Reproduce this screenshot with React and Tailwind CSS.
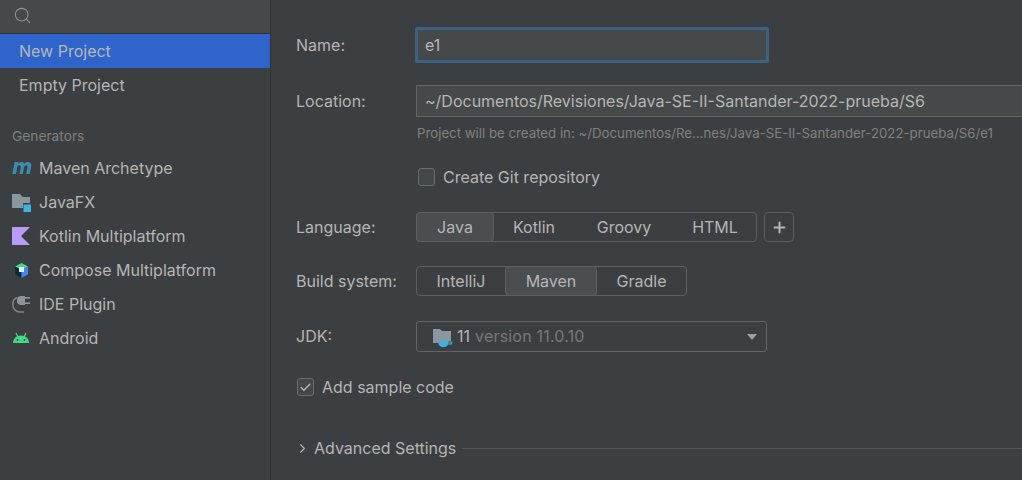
import { Check, ChevronRight, Plus, Search } from 'lucide-react';

function MavenIcon() {
  return (
    <svg width="20" height="20" viewBox="0 0 20 20">
      <path d="M0.3 16 L2.6 4 H6.6 L6.4 5.6 C8 3.6 11.2 3.2 12.2 5.6 C14 3.4 18.8 2.9 19.3 6.6 C19.4 7.6 19.2 8.6 19 9.6 L17.7 16 H14.2 L15.5 9.4 C15.9 7.2 13.9 6.6 12.3 8.2 L10.7 16 H7.4 L8.7 9.4 C9.1 7.2 7.1 6.6 5.5 8.2 L3.9 16 Z" fill="#3a8bad" />
    </svg>
  );
}

function JavaFxIcon() {
  return (
    <svg width="20" height="20" viewBox="0 0 20 20">
      <path d="M0 2 H8 L10.5 5 H18 V11 H11 V16 H0 Z" fill="#8a979f" />
      <rect x="11.5" y="12.5" width="7.5" height="7.5" fill="#3cb2e2" />
    </svg>
  );
}

function KotlinIcon() {
  return (
    <svg width="20" height="20" viewBox="0 0 20 20">
      <path d="M0 1 H18 L9 10 L18 19 H0 Z" fill="#b99bf8" />
    </svg>
  );
}

function ComposeIcon() {
  return (
    <svg width="20" height="20" viewBox="0 0 20 20">
      <path d="M9.5 3 L16 6.5 L9.5 10 L3 6.5 Z" fill="#3ddc84" />
      <path d="M3 6.5 L9.5 10 V18 L3 14.3 Z" fill="#0d2a3a" />
      <path d="M16 6.5 L9.5 10 V18 L16 14.3 Z" fill="#4285f4" />
      <rect x="7" y="7" width="5" height="5" fill="#e8f1f6" />
    </svg>
  );
}

function PluginIcon() {
  return (
    <svg width="20" height="20" viewBox="0 0 20 20">
      <path d="M5 3.5 C1.8 5 0.8 7.5 0.8 10 C0.8 15 4 18 8 18 H12" fill="none" stroke="#7d8488" strokeWidth="1.5" />
      <path d="M5 6 C5 3.5 6.5 2 9 2 H13 V11 H9 C6.5 11 5 9.5 5 7.5 Z" fill="#8c9499" />
      <rect x="13" y="3" width="5" height="1.6" fill="#8c9499" />
      <rect x="13" y="8.4" width="5" height="1.6" fill="#8c9499" />
    </svg>
  );
}

function AndroidIcon() {
  return (
    <svg width="20" height="20" viewBox="0 0 20 20">
      <path d="M1 15 C1 10.5 4.5 7.5 9 7.5 C13.5 7.5 17 10.5 17 15 Z" fill="#3ddc84" />
      <path d="M4 5 L6 9 M14 5 L12 9" stroke="#3ddc84" strokeWidth="1.2" />
      <circle cx="5.5" cy="12" r="0.9" fill="#3c3f41" />
      <circle cx="12.5" cy="12" r="0.9" fill="#3c3f41" />
    </svg>
  );
}

function JdkIcon() {
  return (
    <svg width="20" height="20" viewBox="0 0 20 20">
      <path d="M0 2 H7 L9 4 H18 V14 H5 V16 H0 Z" fill="#8a979f" />
      <path d="M5 14 H15.5 C15.5 18 14 20 10.5 20 C7 20 5 18 5 14 Z" fill="#3cb2e2" />
      <path d="M15 15 H18.6 V17 H15" fill="none" stroke="#3cb2e2" strokeWidth="1.1" />
    </svg>
  );
}

const generators = [
  { name: 'Maven Archetype', icon: <MavenIcon /> },
  { name: 'JavaFX', icon: <JavaFxIcon /> },
  { name: 'Kotlin Multiplatform', icon: <KotlinIcon /> },
  { name: 'Compose Multiplatform', icon: <ComposeIcon /> },
  { name: 'IDE Plugin', icon: <PluginIcon /> },
  { name: 'Android', icon: <AndroidIcon /> },
];

function Sidebar() {
  return (
    <div className="w-[271px] shrink-0 border-r border-[#323232] bg-[#3c3f41]">
      <div className="flex h-[34px] items-center border-b border-[#2f3336] bg-[#45494a] pl-[13px] pb-[3px]">
        <Search size={19} strokeWidth={1.4} className="text-[#8c9194]" />
      </div>
      <div className="flex h-[34px] items-center bg-[#2f65ca] pl-[19px] text-[#b5b8ba]">New Project</div>
      <div className="flex h-[34px] items-center pl-[19px] text-[#b5b5b5]">Empty Project</div>
      <div className="mt-[25px] pl-[12px] text-[13.75px] leading-[18px] text-[#808080]">Generators</div>
      <div className="mt-[6px]">
        {generators.map((g) => (
          <div key={g.name} className="flex h-[34px] items-center pl-[12px] text-[#b5b5b5]">
            <span className="mr-[7px] flex w-[20px] justify-center">{g.icon}</span>
            {g.name}
          </div>
        ))}
      </div>
    </div>
  );
}

function Segmented({ items, selected, widths }) {
  return (
    <div className="flex h-[30px] rounded-[4px] border border-[#5e6060]">
      {items.map((item, i) => (
        <div
          key={item}
          className={
            item === selected
              ? 'flex -my-px items-center justify-center rounded-[4px] border border-[#5e6060] bg-[#4a4e50] text-[#b5b5b5] first:-ml-px'
              : 'flex items-center justify-center text-[#b5b5b5]'
          }
          style={{ width: widths[i] }}
        >
          {item}
        </div>
      ))}
    </div>
  );
}

function Label({ children }) {
  return <div className="w-[120px] shrink-0 text-[#b5b5b5]">{children}</div>;
}

function Form() {
  return (
    <div className="min-w-0 flex-1 overflow-hidden pl-[25px]">
      <div className="mt-[28px] flex h-[34px] items-center">
        <Label>Name:</Label>
        <div className="-my-px -ml-px flex h-[36px] w-[354px] items-center rounded-[2px] border-[3px] border-[#3d6185] bg-[#45494a] pl-[7px] text-[#b5b5b5]">
          e1
        </div>
      </div>

      <div className="mt-[23px] flex h-[32px] items-center">
        <Label>Location:</Label>
        <div className="flex h-[32px] flex-1 items-center border border-r-0 border-[#646464] bg-[#45494a] pl-[8px] whitespace-nowrap text-[#b5b5b5]">
          ~/Documentos/Revisiones/Java-SE-II-Santander-2022-prueba/S6
        </div>
      </div>
      <div className="mt-[8px] pl-[121px] text-[13.25px] leading-[17px] whitespace-nowrap text-[#808080]">
        Project will be created in: ~/Documentos/Re...nes/Java-SE-II-Santander-2022-prueba/S6/e1
      </div>

      <div className="mt-[26px] flex h-[18px] items-center pl-[122px]">
        <div className="mr-[8px] h-[18px] w-[17px] rounded-[3px] border border-[#6b6b6b] bg-[#43494a]" />
        <span className="text-[#b5b5b5]">Create Git repository</span>
      </div>

      <div className="mt-[26px] flex h-[30px] items-center">
        <Label>Language:</Label>
        <Segmented items={['Java', 'Kotlin', 'Groovy', 'HTML']} selected="Java" widths={[78, 80, 100, 82]} />
        <div className="ml-[7px] flex size-[30px] items-center justify-center rounded-[4px] border border-[#5e6060] text-[#b5b5b5]">
          <Plus size={17} strokeWidth={2.75} />
        </div>
      </div>

      <div className="mt-[24px] flex h-[30px] items-center">
        <Label>Build system:</Label>
        <Segmented items={['IntelliJ', 'Maven', 'Gradle']} selected="Maven" widths={[88, 92, 89]} />
      </div>

      <div className="mt-[25px] flex h-[31px] items-center">
        <div className="pb-px">
          <Label>JDK:</Label>
        </div>
        <div className="flex h-[31px] w-[351px] items-center rounded-[3px] border border-[#646464] pr-[9px] pl-[16px]">
          <JdkIcon />
          <span className="ml-[4px] pb-px text-[#b5b5b5]">11</span>
          <span className="ml-[5px] pb-px tracking-[0.2px] text-[#787878]">version 11.0.10</span>
          <div className="ml-auto h-0 w-0 border-x-[5.5px] border-t-[6px] border-x-transparent border-t-[#a0a0a0]" />
        </div>
      </div>

      <div className="mt-[26px] flex h-[18px] items-center pl-px">
        <div className="mr-[8px] flex h-[18px] w-[17px] items-center justify-center rounded-[3px] border border-[#6b6b6b] bg-[#43494a] text-[#b5b5b5]">
          <Check size={13} strokeWidth={2.5} />
        </div>
        <span className="text-[#b5b5b5]">Add sample code</span>
      </div>

      <div className="mt-[41px] flex h-[22px] items-center">
        <ChevronRight size={15} strokeWidth={1.75} className="-ml-[1px] mr-[4px] text-[#b5b5b5]" />
        <span className="text-[#b5b5b5]">Advanced Settings</span>
        <div className="ml-[6px] h-px flex-1 bg-[#555555]" />
      </div>
    </div>
  );
}

export default function App() {
  return (
    <div className="flex h-[480px] w-[1022px] overflow-hidden bg-[#3c3f41] font-['Inter',sans-serif] text-[16px]">
      <Sidebar />
      <Form />
    </div>
  );
}
